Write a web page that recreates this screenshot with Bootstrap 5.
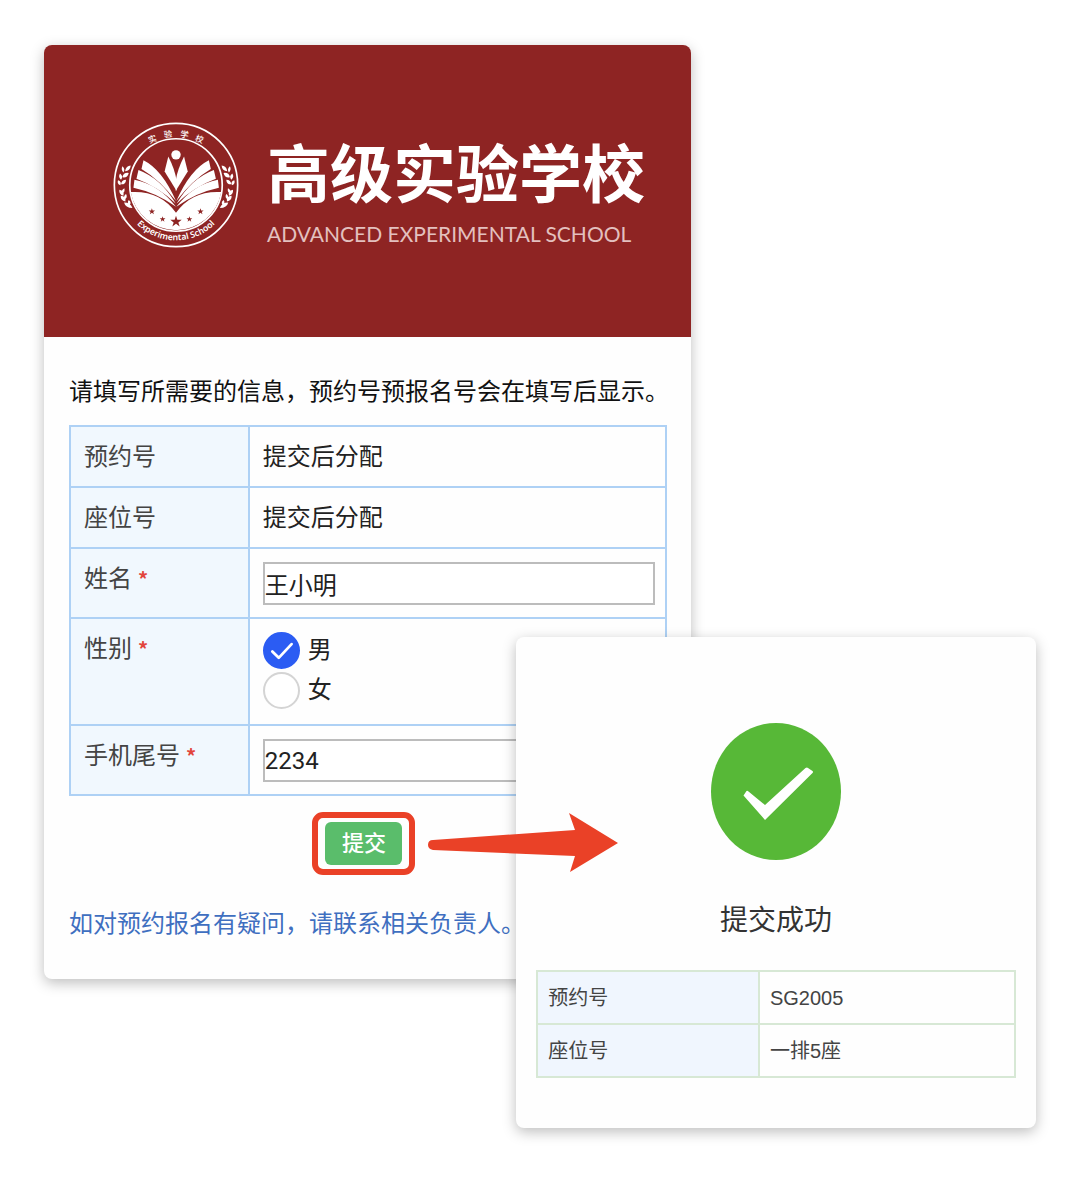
<!DOCTYPE html>
<html lang="zh-CN">
<head>
<meta charset="utf-8">
<meta name="viewport" content="width=device-width, initial-scale=1">
<title>高级实验学校 预约报名</title>
<link href="https://cdn.jsdelivr.net/npm/bootstrap@5.3.0/dist/css/bootstrap.min.css" rel="stylesheet">
<style>
  body { font-family: Roboto, "Noto Sans CJK SC", sans-serif; background: #fff; color: #222; }
  .stage { display: grid; padding: 45px 44px 48px; }
  .stage > * { grid-area: 1 / 1; }
  .panel { border: 0; border-radius: 8px; background: #fefefe; box-shadow: 0 4px 14px rgba(0, 0, 0, .26); }
  .signup { width: 65.2%; align-self: start; margin-bottom: 149px; font-size: 24px; line-height: 36px; }
  .result { width: 52.4%; align-self: end; justify-self: end; z-index: 1; padding: 86px 20px 50px; }
  .banner { background: #8e2423; border-radius: 8px 8px 0 0; padding: 77px 44px 76px 69px; gap: 28px; min-height: 292px; }
  .emblem { width: 126px; height: 126px; }
  .school { font: 700 63px/72px "Noto Sans CJK SC", sans-serif; margin: 12px 0 14px; }
  .school-en { font: 400 21px/28px Lato, sans-serif; color: #e3c0bf; }
  .signup-body { padding: 37px 24px 37px 25px; }
  .intro { margin-bottom: 15px; color: #111; }
  .grid-form { border: 2px solid #aed1f5; border-collapse: collapse; width: 100%; }
  .grid-form th, .grid-form td { border: 2px solid #aed1f5; padding: 12px 10px 11px 13px; vertical-align: top; }
  .grid-form th { width: 30%; background: #f1f8fe; font-weight: 400; color: #444; }
  .grid-form .has-field { padding-top: 13px; padding-bottom: 12px; }
  .req { color: #e2453c; font: 700 20px/30px "Noto Sans CJK SC", sans-serif; }
  .field { height: 43px; padding: 0; border: 2px solid #bcbcbc; border-radius: 0; font-size: 24px; color: #222; background: #fff; }
  .pick { display: flex; align-items: center; gap: 8px; height: 36px; margin-bottom: 4px; padding: 0; }
  .pick .form-check-input { width: 37px; height: 37px; margin: 0; float: none; flex: none; border: 2px solid #d4d4d4; }
  .pick .form-check-input:checked { background-color: #2b5cf3; border-color: #2b5cf3;
    background-image: url("data:image/svg+xml,%3Csvg xmlns='http://www.w3.org/2000/svg' viewBox='0 0 36 36'%3E%3Cpath d='M8 19l7 7L29 11' fill='none' stroke='white' stroke-width='3' stroke-linecap='round' stroke-linejoin='round'/%3E%3C/svg%3E"); }
  .send-row { padding: 16px 8px 31px 0; }
  .ring { position: relative; border: 6px solid #ea4127; border-radius: 11px; padding: 4px 7px; }
  .send { width: 77px; height: 43px; padding: 0; border: 0; border-radius: 6px; background: #5abd6b; color: #fff; font-size: 22px; font-weight: 500; line-height: 43px; }
  .send:hover { background: #4dae5e; color: #fff; }
  .arrow { position: absolute; left: 109px; top: -6px; width: 192px; height: 62px; z-index: 2; }
  .help { color: #3f6fc0; text-decoration: none; white-space: nowrap; }
  .tick { width: 130px; height: 137px; }
  .done { font-size: 28px; line-height: 42px; font-weight: 400; color: #333; margin: 40px 0 28px; }
  .receipt { width: 100%; border-collapse: collapse; font: 400 20px/30px "Liberation Sans", "Noto Sans CJK SC", sans-serif; color: #444; }
  .receipt th, .receipt td { border: 2px solid #d7e8d5; padding: 11px 10px 10px; font-weight: 400; }
  .receipt th { width: 46.4%; background: #f0f6fe; }
</style>
<script src="https://cdn.jsdelivr.net/npm/bootstrap@5.3.0/dist/js/bootstrap.bundle.min.js"></script>
</head>
<body>
<main class="stage">
  <section class="card panel signup">
    <header class="banner d-flex align-items-start text-white">
      <svg class="emblem flex-shrink-0" viewBox="41 36 376 376" role="img" aria-label="校徽">
        <defs>
          <path id="lower" d="M63 223A166 166 0 0 0 395 223"/>
          <path id="star" d="M0-17L4-5H17L7 3L11 15L0 7L-11 15L-7 3L-17-5H-4Z"/>
          <g id="half">
            <path d="M206 139L195 184L231 242V212Q226 178 206 139Z"/>
            <path d="M132 150Q188 178 229 272Q182 209 126 176Z"/>
            <path d="M117 179Q184 204 228 279Q176 229 111 205Z"/>
            <path d="M105 208Q178 222 229 289Q172 247 102 232Z"/>
            <path d="M94 166Q80 167 77 183Q92 183 94 166ZM69 168Q64 178 72 187Q79 177 69 168ZM88 188Q72 186 69 201Q84 204 88 188ZM62 190Q55 200 65 208Q73 198 62 190ZM80 208Q66 208 65 222Q79 223 80 208ZM56 210Q52 221 63 225Q68 214 56 210Z"/>
            <path d="M60 238Q58 252 72 256Q76 241 60 238ZM75 234Q65 239 67 251Q78 247 75 234ZM64 256Q63 270 78 273Q81 258 64 256ZM80 251Q71 257 75 268Q86 262 80 251ZM74 276Q78 292 99 293Q94 276 74 276ZM88 269Q82 277 90 285Q98 277 88 269Z"/>
          </g>
        </defs>
        <g fill="none" stroke="#fff" stroke-width="5"><circle cx="229" cy="224" r="184"/><circle cx="229" cy="224" r="138"/></g>
        <g fill="#fff">
          <circle cx="229" cy="134" r="14"/>
          <use href="#half"/><use href="#half" transform="matrix(-1 0 0 1 459 0)"/>
          <path d="M94 245Q182 240 229 307Q276 240 364 245A137 137 0 0 1 94 245Z"/>
          <text font-family="Noto Sans CJK SC, sans-serif" font-weight="500" font-size="25" x="150 194 241 284" y="100 83 81 91" rotate="-20 -7 7 20">实验学校</text>
          <text font-family="Noto Sans, sans-serif" font-weight="600" font-size="26" text-anchor="middle"><textPath href="#lower" startOffset="50%">Experimental School</textPath></text>
        </g>
        <g fill="#8e2423">
          <use href="#star" transform="translate(229 333)"/>
          <use href="#star" transform="translate(189 326) scale(.5)"/><use href="#star" transform="translate(269 326) scale(.5)"/>
          <use href="#star" transform="translate(157 303) scale(.55)"/><use href="#star" transform="translate(302 303) scale(.55)"/>
        </g>
      </svg>
      <div class="text-nowrap">
        <h1 class="school">高级实验学校</h1>
        <p class="school-en mb-0">ADVANCED EXPERIMENTAL SCHOOL</p>
      </div>
    </header>
    <form class="signup-body" onsubmit="return false">
      <p class="intro text-nowrap">请填写所需要的信息，预约号预报名号会在填写后显示。</p>
      <table class="grid-form">
        <tbody>
          <tr><th scope="row">预约号</th><td>提交后分配</td></tr>
          <tr><th scope="row">座位号</th><td>提交后分配</td></tr>
          <tr><th scope="row"><label for="name">姓名 <span class="req">*</span></label></th>
            <td class="has-field"><input class="form-control field" id="name" type="text" value="王小明"></td></tr>
          <tr><th scope="row" id="sex">性别 <span class="req">*</span></th>
            <td class="has-field">
              <div role="radiogroup" aria-labelledby="sex">
                <div class="form-check pick"><input class="form-check-input" type="radio" name="sex" id="male" checked><label for="male">男</label></div>
                <div class="form-check pick"><input class="form-check-input" type="radio" name="sex" id="female"><label for="female">女</label></div>
              </div>
            </td></tr>
          <tr><th scope="row"><label for="tail">手机尾号 <span class="req">*</span></label></th>
            <td class="has-field"><input class="form-control field" id="tail" type="text" inputmode="numeric" value="2234"></td></tr>
        </tbody>
      </table>
      <div class="send-row d-flex justify-content-center">
        <div class="ring d-flex">
          <button class="btn send" type="submit">提交</button>
          <svg class="arrow" viewBox="0 0 192 62" aria-hidden="true"><path fill="#ea4127" d="M6 28L148 18L142 1L191 31L143 60L148 44L6 38Q1 37 1 33Q1 28 6 28Z"/></svg>
        </div>
      </div>
      <a class="help" href="#">如对预约报名有疑问，请联系相关负责人。</a>
    </form>
  </section>

  <section class="card panel result">
    <div class="d-flex flex-column align-items-center">
      <svg class="tick" viewBox="0 0 260 274" aria-hidden="true"><ellipse cx="130" cy="137" rx="130" ry="137" fill="#57b837"/><path fill="#fff" d="M65 145L71 136Q73 135 75 137L108 164L189 90Q192 88 194 90L203 96Q205 98 203 100L108 194Z"/></svg>
      <h2 class="done">提交成功</h2>
    </div>
    <table class="receipt">
      <tbody>
        <tr><th scope="row">预约号</th><td>SG2005</td></tr>
        <tr><th scope="row">座位号</th><td>一排5座</td></tr>
      </tbody>
    </table>
  </section>
</main>
</body>
</html>
